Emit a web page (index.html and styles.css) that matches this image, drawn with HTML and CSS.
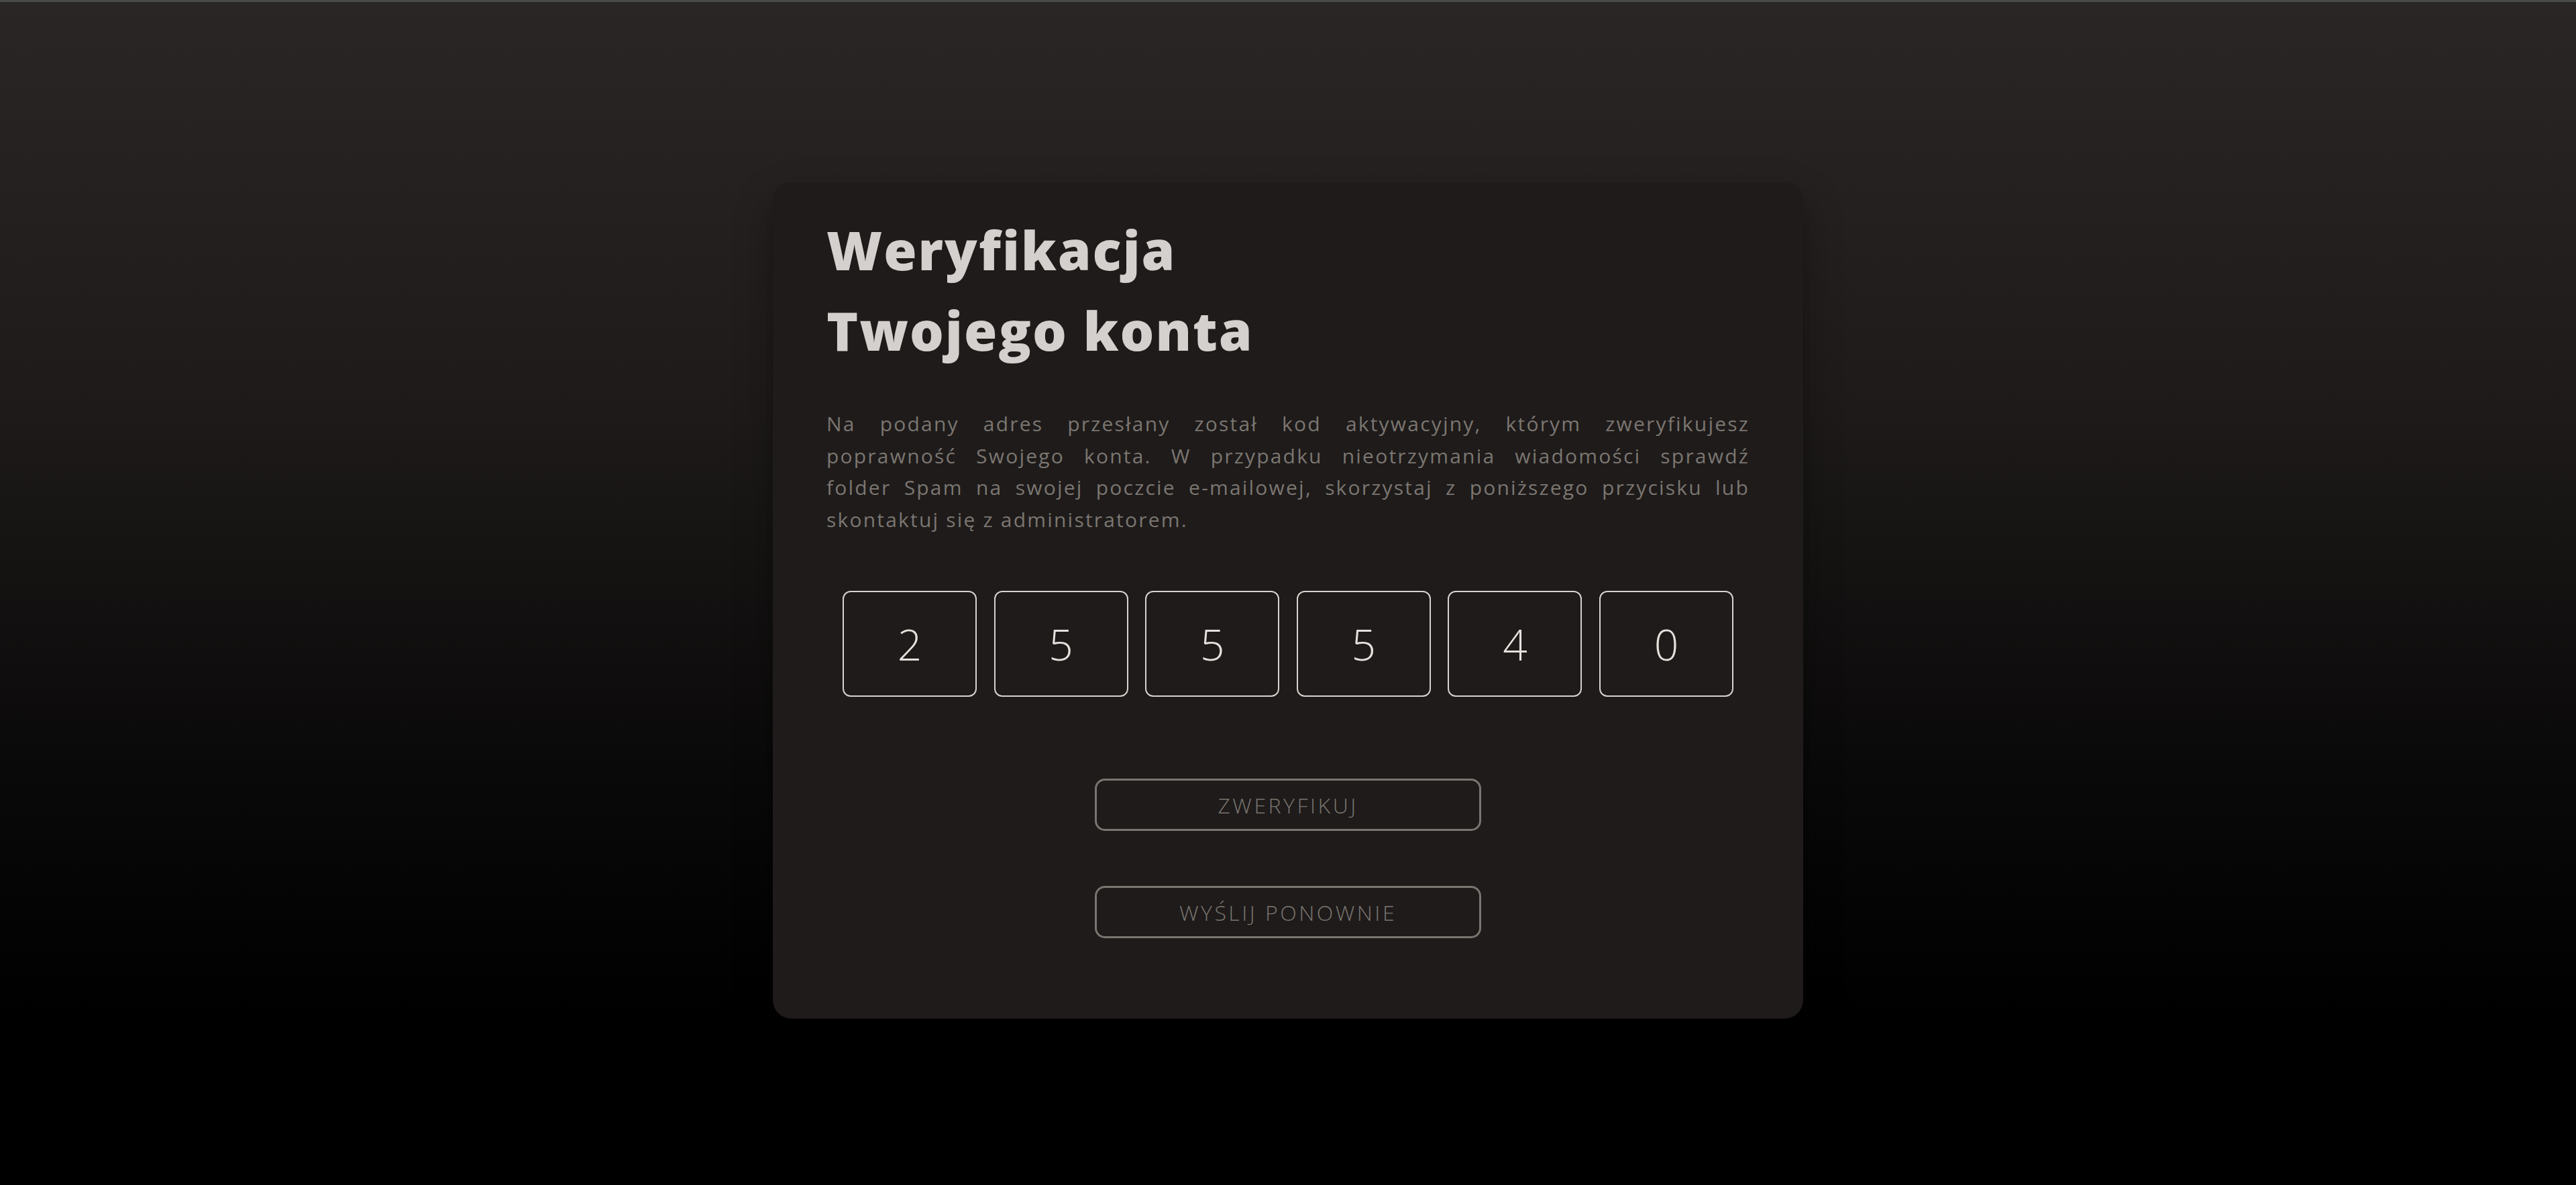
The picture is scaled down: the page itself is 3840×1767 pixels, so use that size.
FILE: index.html
```html
<!DOCTYPE html>
<html lang="pl">
<head>
<meta charset="utf-8">
<title>Weryfikacja Twojego konta</title>
<link rel="stylesheet" href="styles.css">
</head>
<body>
<main class="page">
  <section class="card">
    <h1 class="title">Weryfikacja<br>Twojego konta</h1>
    <p class="lead"><span class="line">Na podany adres przesłany został kod aktywacyjny, którym zweryfikujesz</span> <span class="line">poprawność Swojego konta. W przypadku nieotrzymania wiadomości sprawdź</span> <span class="line">folder Spam na swojej poczcie e-mailowej, skorzystaj z poniższego przycisku lub</span> <span class="line line-last">skontaktuj się z administratorem.</span></p>
    <div class="code">
      <div class="digit">2</div>
      <div class="digit">5</div>
      <div class="digit">5</div>
      <div class="digit">5</div>
      <div class="digit">4</div>
      <div class="digit">0</div>
    </div>
    <div class="actions">
      <button class="btn" type="button">ZWERYFIKUJ</button>
      <button class="btn" type="button">WYŚLIJ PONOWNIE</button>
    </div>
  </section>
</main>
</body>
</html>
```
FILE: styles.css
```css
html, body {
  margin: 0;
  padding: 0;
}
body {
  min-height: 100vh;
  box-sizing: border-box;
  border-top: 3px solid #4b4a4a;
  background: linear-gradient(to bottom, #292625 0%, #1d1a19 35%, #0a0909 65%, #000 86%, #000 100%);
  font-family: "Open Sans", "Noto Sans", sans-serif;
}
.page {
  display: flex;
  justify-content: center;
  padding-top: 269px;
}
.card {
  width: 1536px;
  box-sizing: border-box;
  padding: 40px 80px 120px;
  background: #1e1b1a;
  border-radius: 28px;
  box-shadow: 0 30px 14px -6px rgba(0,0,0,0.35), 0 24px 60px rgba(0,0,0,0.28);
}
.title {
  margin: 0;
  font-size: 80px;
  line-height: 120px;
  font-weight: 800;
  color: #d3d0cd;
  letter-spacing: 2px;
}
.lead {
  margin: 56px 0 0;
  font-size: 30px;
  line-height: 47.5px;
  color: #7b7671;
  text-align: justify;
  letter-spacing: 2.2px;
}
.line {
  display: block;
  text-align: justify;
  text-align-last: justify;
}
.line-last {
  text-align-last: left;
}
.code {
  display: flex;
  justify-content: center;
  gap: 25.6px;
  margin-top: 83px;
}
.digit {
  width: 200px;
  height: 158px;
  box-sizing: border-box;
  border: 2px solid #d6d2ce;
  border-radius: 12px;
  display: flex;
  align-items: center;
  justify-content: center;
  font-size: 64px;
  font-weight: 300;
  color: #e4e0dc;
}
.actions {
  display: flex;
  flex-direction: column;
  align-items: center;
  gap: 82px;
  margin-top: 122px;
}
.btn {
  width: 576px;
  height: 78px;
  box-sizing: border-box;
  border: 3px solid #7a7570;
  border-radius: 15px;
  background: transparent;
  color: #7a7570;
  font-family: "Open Sans", "Noto Sans", sans-serif;
  font-size: 32px;
  font-weight: 300;
  letter-spacing: 3.5px;
  padding: 0;
}
```
